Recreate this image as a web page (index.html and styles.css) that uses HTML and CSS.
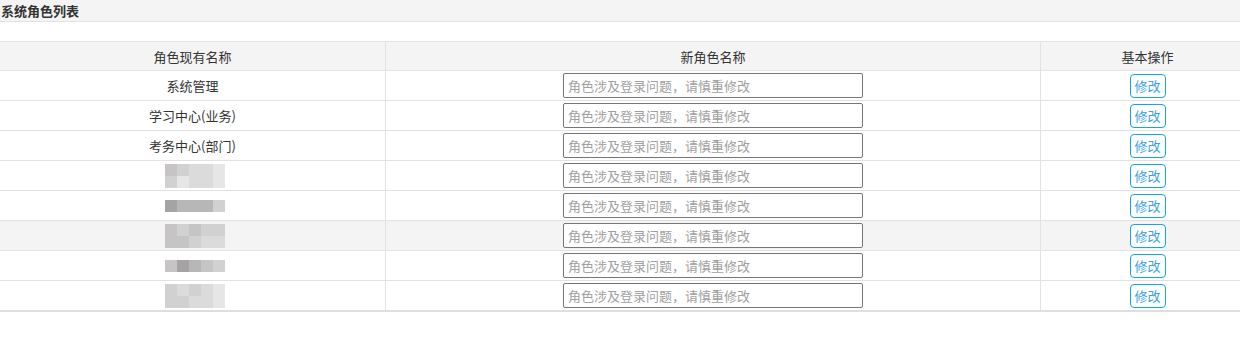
FILE: index.html
```html
<!DOCTYPE html>
<html lang="zh-CN">

<head>
    <meta charset="UTF-8">
    <meta name="viewport" content="width=device-width, initial-scale=1.0">
    <title>系统角色列表</title>
    <link rel="stylesheet" href="styles.css">
</head>

<body>

    <div class="panel-title">系统角色列表</div>

    <!-- Role list -->
    <table class="role-table">
        <thead>
            <tr>
                <th class="col-name">角色现有名称</th>
                <th class="col-new">新角色名称</th>
                <th class="col-op">基本操作</th>
            </tr>
        </thead>
        <tbody>
            <tr>
                <td>系统管理</td>
                <td><input type="text" placeholder="角色涉及登录问题，请慎重修改"></td>
                <td><button class="edit">修改</button></td>
            </tr>
            <tr>
                <td>学习中心(业务)</td>
                <td><input type="text" placeholder="角色涉及登录问题，请慎重修改"></td>
                <td><button class="edit">修改</button></td>
            </tr>
            <tr>
                <td>考务中心(部门)</td>
                <td><input type="text" placeholder="角色涉及登录问题，请慎重修改"></td>
                <td><button class="edit">修改</button></td>
            </tr>
            <tr>
                <td>
                    <div class="mosaic">
                        <i class="s2"></i><i class="s3"></i><i class="s4"></i><i class="s4"></i><i class="s5"></i>
                        <i class="s3"></i><i class="s5"></i><i class="s4"></i><i class="s4"></i><i class="s5"></i>
                    </div>
                </td>
                <td><input type="text" placeholder="角色涉及登录问题，请慎重修改"></td>
                <td><button class="edit">修改</button></td>
            </tr>
            <tr>
                <td>
                    <div class="mosaic one">
                        <i class="s0"></i><i class="s1"></i><i class="s1"></i><i class="s1"></i><i class="s3"></i>
                    </div>
                </td>
                <td><input type="text" placeholder="角色涉及登录问题，请慎重修改"></td>
                <td><button class="edit">修改</button></td>
            </tr>
            <tr class="hover">
                <td>
                    <div class="mosaic">
                        <i class="s2"></i><i class="s3"></i><i class="s2"></i><i class="s3"></i><i class="s3"></i>
                        <i class="s2"></i><i class="s2"></i><i class="s3"></i><i class="s4"></i><i class="s4"></i>
                    </div>
                </td>
                <td><input type="text" placeholder="角色涉及登录问题，请慎重修改"></td>
                <td><button class="edit">修改</button></td>
            </tr>
            <tr>
                <td>
                    <div class="mosaic one">
                        <i class="s2"></i><i class="s0"></i><i class="s1"></i><i class="s2"></i><i class="s3"></i>
                    </div>
                </td>
                <td><input type="text" placeholder="角色涉及登录问题，请慎重修改"></td>
                <td><button class="edit">修改</button></td>
            </tr>
            <tr>
                <td>
                    <div class="mosaic">
                        <i class="s3"></i><i class="s4"></i><i class="s3"></i><i class="s4"></i><i class="s5"></i>
                        <i class="s3"></i><i class="s3"></i><i class="s4"></i><i class="s4"></i><i class="s5"></i>
                    </div>
                </td>
                <td><input type="text" placeholder="角色涉及登录问题，请慎重修改"></td>
                <td><button class="edit">修改</button></td>
            </tr>
        </tbody>
    </table>

</body>

</html>
```

FILE: styles.css
```css
body {
    font-family: "Noto Sans CJK SC", "Noto Sans", sans-serif;
    font-size: 13px;
    color: #333;
    margin: 0;
    padding: 0;
    background-color: #fff;
}

.panel-title {
    height: 21px;
    line-height: 21px;
    padding-left: 1px;
    font-weight: bold;
    background-color: #f4f4f4;
    border-bottom: 1px solid #e2e2e2;
    margin-bottom: 19px;
}

.role-table {
    width: 100%;
    border-collapse: collapse;
    table-layout: fixed;
    border-top: 1px solid #e2e2e2;
    border-bottom: 2px solid #dedede;
}

.role-table th,
.role-table td {
    padding: 0;
    text-align: center;
    font-weight: normal;
    border-bottom: 1px solid #e2e2e2;
    border-right: 1px solid #e2e2e2;
}

.role-table th:last-child,
.role-table td:last-child {
    border-right: none;
    padding-left: 14px;
}

.role-table th {
    height: 28px;
    background-color: #f4f4f4;
}

.role-table td {
    height: 29px;
}

.col-name {
    width: 385px;
}

.col-new {
    width: 654px;
}

.role-table tr.hover td {
    background-color: #f4f4f4;
}

input[type="text"] {
    box-sizing: border-box;
    width: 300px;
    height: 25px;
    margin: 0;
    padding: 0 4px;
    border: 1px solid #767676;
    border-radius: 2px;
    background-color: #fff;
    font-family: inherit;
    font-size: 13px;
    vertical-align: middle;
}

input::placeholder {
    color: #a0a0a0;
}

button.edit {
    box-sizing: border-box;
    width: 36px;
    height: 24px;
    padding: 0;
    border: 1px solid #14a4ec;
    border-radius: 4px;
    background-color: #fff;
    color: #3b9fe3;
    font-family: inherit;
    font-size: 13px;
    vertical-align: middle;
    cursor: pointer;
}

.mosaic {
    display: grid;
    grid-template-columns: repeat(5, 12px);
    grid-auto-rows: 12px;
    width: 60px;
    margin: 0 0 0 165px;
}

.mosaic i {
    display: block;
}

.s0 { background-color: #a6a3a4; }
.s1 { background-color: #b7b7b7; }
.s2 { background-color: #c6c4c4; }
.s3 { background-color: #d1d1d1; }
.s4 { background-color: #dbdbdb; }
.s5 { background-color: #e6e6e6; }
```
